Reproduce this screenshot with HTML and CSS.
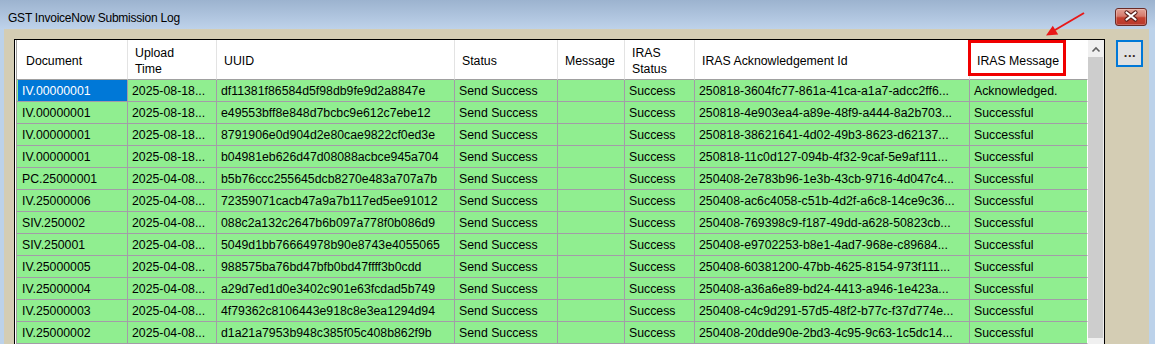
FILE: index.html
```html
<!DOCTYPE html>
<html lang="en">
<head>
  <meta charset="UTF-8" />
  <title>GST InvoiceNow Submission Log</title>
  <link rel="stylesheet" href="styles.css">
</head>
<body>
  <div class="titlebar">
    <div class="title">GST InvoiceNow Submission Log</div>
    <div class="close-btn">
      <svg width="32" height="18" viewBox="0 0 32 18">
        <path d="M11.5 4.5 L20.5 11.5 M20.5 4.5 L11.5 11.5" stroke="#5a1f1a" stroke-width="4.2" stroke-linecap="round" fill="none"/>
        <path d="M11.5 4.5 L20.5 11.5 M20.5 4.5 L11.5 11.5" stroke="#ffffff" stroke-width="2.2" stroke-linecap="round" fill="none"/>
      </svg>
    </div>
  </div>

  <div class="client">
    <div class="grid">
      <div class="grid-body">
        <table class="log">
          <thead>
            <tr>
              <th class="c-doc">Document</th>
              <th class="c-time">Upload<br>Time</th>
              <th class="c-uuid">UUID</th>
              <th class="c-status">Status</th>
              <th class="c-msg">Message</th>
              <th class="c-iras">IRAS<br>Status</th>
              <th class="c-ack">IRAS Acknowledgement Id</th>
              <th class="c-irasmsg">IRAS Message</th>
            </tr>
          </thead>
          <tbody>
            <tr>
              <td class="selected">IV.00000001</td><td>2025-08-18...</td><td>df11381f86584d5f98db9fe9d2a8847e</td><td>Send Success</td><td></td><td>Success</td><td>250818-3604fc77-861a-41ca-a1a7-adcc2ff6...</td><td>Acknowledged.</td>
            </tr>
            <tr>
              <td>IV.00000001</td><td>2025-08-18...</td><td>e49553bff8e848d7bcbc9e612c7ebe12</td><td>Send Success</td><td></td><td>Success</td><td>250818-4e903ea4-a89e-48f9-a444-8a2b703...</td><td>Successful</td>
            </tr>
            <tr>
              <td>IV.00000001</td><td>2025-08-18...</td><td>8791906e0d904d2e80cae9822cf0ed3e</td><td>Send Success</td><td></td><td>Success</td><td>250818-38621641-4d02-49b3-8623-d62137...</td><td>Successful</td>
            </tr>
            <tr>
              <td>IV.00000001</td><td>2025-08-18...</td><td>b04981eb626d47d08088acbce945a704</td><td>Send Success</td><td></td><td>Success</td><td>250818-11c0d127-094b-4f32-9caf-5e9af111...</td><td>Successful</td>
            </tr>
            <tr>
              <td>PC.25000001</td><td>2025-04-08...</td><td>b5b76ccc255645dcb8270e483a707a7b</td><td>Send Success</td><td></td><td>Success</td><td>250408-2e783b96-1e3b-43cb-9716-4d047c4...</td><td>Successful</td>
            </tr>
            <tr>
              <td>IV.25000006</td><td>2025-04-08...</td><td>72359071cacb47a9a7b117ed5ee91012</td><td>Send Success</td><td></td><td>Success</td><td>250408-ac6c4058-c51b-4d2f-a6c8-14ce9c36...</td><td>Successful</td>
            </tr>
            <tr>
              <td>SIV.250002</td><td>2025-04-08...</td><td>088c2a132c2647b6b097a778f0b086d9</td><td>Send Success</td><td></td><td>Success</td><td>250408-769398c9-f187-49dd-a628-50823cb...</td><td>Successful</td>
            </tr>
            <tr>
              <td>SIV.250001</td><td>2025-04-08...</td><td>5049d1bb76664978b90e8743e4055065</td><td>Send Success</td><td></td><td>Success</td><td>250408-e9702253-b8e1-4ad7-968e-c89684...</td><td>Successful</td>
            </tr>
            <tr>
              <td>IV.25000005</td><td>2025-04-08...</td><td>988575ba76bd47bfb0bd47ffff3b0cdd</td><td>Send Success</td><td></td><td>Success</td><td>250408-60381200-47bb-4625-8154-973f111...</td><td>Successful</td>
            </tr>
            <tr>
              <td>IV.25000004</td><td>2025-04-08...</td><td>a29d7ed1d0e3402c901e63fcdad5b749</td><td>Send Success</td><td></td><td>Success</td><td>250408-a36a6e89-bd24-4413-a946-1e423a...</td><td>Successful</td>
            </tr>
            <tr>
              <td>IV.25000003</td><td>2025-04-08...</td><td>4f79362c8106443e918c8e3ea1294d94</td><td>Send Success</td><td></td><td>Success</td><td>250408-c4c9d291-57d5-48f2-b77c-f37d774e...</td><td>Successful</td>
            </tr>
            <tr>
              <td>IV.25000002</td><td>2025-04-08...</td><td>d1a21a7953b948c385f05c408b862f9b</td><td>Send Success</td><td></td><td>Success</td><td>250408-20dde90e-2bd3-4c95-9c63-1c5dc14...</td><td>Successful</td>
            </tr>
          </tbody>
        </table>

        <!-- scroll vertical -->
        <div class="vscroll">
          <div class="scroll-up">
            <svg width="16" height="17" viewBox="0 0 16 17">
              <path d="M4.5 11.5 L8 8 L11.5 11.5" stroke="#606060" stroke-width="1.6" fill="none"/>
            </svg>
          </div>
          <div class="scroll-thumb"></div>
        </div>
      </div>
    </div>

    <div class="side">
      <button class="more-btn">...</button>
    </div>
  </div>

  <!-- anotacion roja sobre la captura -->
  <svg class="callout" width="1155" height="344" viewBox="0 0 1155 344">
    <rect x="969.5" y="41.5" width="95" height="33" fill="none" stroke="#f00000" stroke-width="3"/>
    <line x1="1084" y1="13" x2="1055" y2="30" stroke="#e81818" stroke-width="2"/>
    <polygon points="1046,35.5 1052.8,25.8 1058.2,34.4" fill="#e81818"/>
  </svg>
</body>
</html>
```

FILE: styles.css
```css
* {
  box-sizing: border-box;
}

body {
  margin: 0;
  width: 1155px;
  height: 344px;
  overflow: hidden;
  position: relative;
  background: #bcd2ea;
  font-family: "Liberation Sans", Arial, sans-serif;
  color: #000;
}

.titlebar {
  display: flex;
  justify-content: space-between;
  align-items: flex-start;
  height: 29px;
  padding: 0 8px;
  background: linear-gradient(#9cb3cf, #bed2ea);
}

.title {
  padding-top: 11px;
  font-size: 12px;
  line-height: 14px;
  letter-spacing: -0.23px;
}

.close-btn {
  margin-top: 8px;
  width: 32px;
  height: 18px;
  border: 1px solid #6b2b26;
  border-radius: 3px;
  background: linear-gradient(#e3a397 0%, #d57a6c 45%, #c4402f 55%, #b9392c 100%);
  box-shadow: inset 0 0 0 1px rgba(255, 255, 255, 0.25);
  overflow: hidden;
}

.close-btn svg {
  display: block;
  margin: -1px 0 0 -1px;
}

.client {
  display: flex;
  align-items: flex-start;
  height: 315px;
  margin: 0 6px 0 4px;
  padding: 10px 0 0 10px;
  background: #d4cdb4;
}

.grid {
  height: 305px;
  padding-left: 1px;
  border: 1px solid #000;
  border-bottom: 0;
  background: #fff;
  overflow: hidden;
}

.grid-body {
  display: flex;
  align-items: stretch;
  height: 100%;
  border-left: 1px solid #a0a0a0;
}

/* Tabla de registros */
.log {
  width: 1071px;
  table-layout: fixed;
  border-collapse: separate;
  border-spacing: 0;
  font-size: 12.3px;
  align-self: flex-start;
}

.log th,
.log td {
  white-space: nowrap;
  overflow: hidden;
  text-align: left;
  vertical-align: middle;
}

.log th {
  height: 40px;
  padding: 2px 4px 0 7px;
  font-weight: normal;
  line-height: 16px;
  background: #fff;
  border-right: 1px solid #e3e3e3;
  border-bottom: 1px solid #a0a0a0;
}

.log td {
  height: 22px;
  padding: 0 2px 0 4px;
  line-height: 14px;
  background: #90ee90;
  border-right: 1px solid #a39ca8;
  border-bottom: 1px solid #a39ca8;
}

.log th:first-child {
  padding-left: 9px;
}

.log td:first-child {
  padding-left: 5px;
}

.log th:last-child,
.log td:last-child {
  border-right-color: #fff;
}

.log td.selected {
  background: #0078d7;
  color: #fff;
  box-shadow: inset 1px 0 #90ee90;
}

.c-doc { width: 111px; }
.c-time { width: 89px; }
.c-uuid { width: 238px; }
.c-status { width: 103px; }
.c-msg { width: 67px; }
.c-iras { width: 70px; }
.c-ack { width: 275px; }
.c-irasmsg { width: 118px; }

.vscroll {
  display: flex;
  flex-direction: column;
  width: 16px;
  background: #f0f0f0;
}

.scroll-up {
  height: 17px;
}

.scroll-up svg {
  display: block;
}

.scroll-thumb {
  width: 15px;
  height: 281px;
  background: #cdcdcd;
}

.side {
  margin-left: 11px;
  padding-top: 1px;
}

.more-btn {
  display: block;
  width: 27px;
  height: 27px;
  padding: 0 0 2px 1px;
  border: 2px solid #0078d7;
  background: #e1e1e1;
  font-family: "Liberation Sans", Arial, sans-serif;
  font-size: 13px;
  font-weight: bold;
  letter-spacing: 0.5px;
  color: #3a2a1e;
  line-height: 14px;
}

.callout {
  position: absolute;
  left: 0;
  top: 0;
  pointer-events: none;
}
```
